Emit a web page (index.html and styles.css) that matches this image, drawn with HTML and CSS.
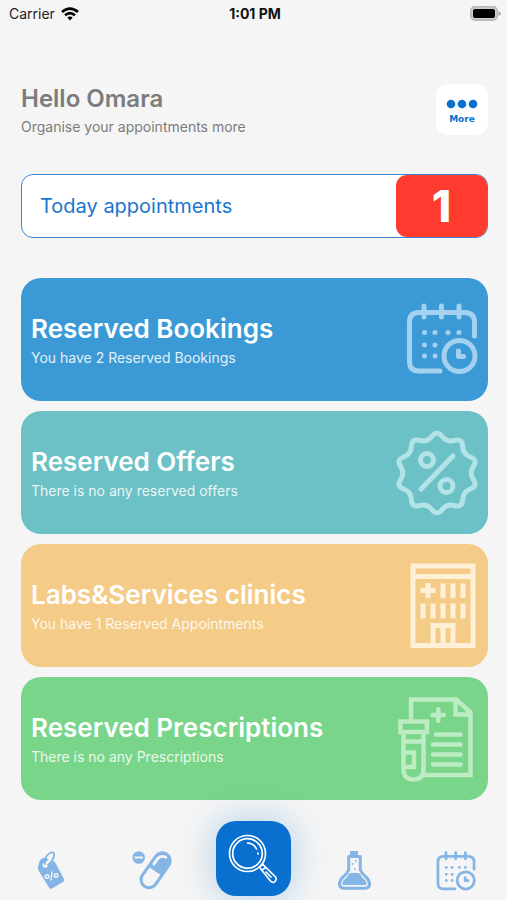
FILE: index.html
```html
<!DOCTYPE html>
<html lang="en">
<head>
<meta charset="utf-8">
<meta name="viewport" content="width=device-width, initial-scale=1">
<title>Appointments</title>
<link rel="stylesheet" href="styles.css">
</head>
<body>
<svg class="defs" aria-hidden="true">
  <symbol id="calendar" viewBox="0 0 72 72">
    <g fill="none" stroke="currentColor" stroke-width="5" stroke-linecap="round" stroke-linejoin="round">
      <path d="M34 68H13Q3.500 68 3.500 58.500V19Q3.500 9.500 13 9.500H58Q68.500 9.500 68.500 19V33"/>
      <path d="M18 3V14M35.500 3V14M53 3V14"/>
      <circle cx="53.500" cy="53" r="15.500"/>
    </g>
    <g fill="currentColor">
      <circle cx="18.500" cy="29.500" r="2.500"/><circle cx="29" cy="29.500" r="2.500"/><circle cx="42" cy="29.500" r="2.500"/><circle cx="53" cy="29.500" r="2.500"/>
      <circle cx="18.500" cy="42" r="2.500"/><circle cx="29" cy="42" r="2.500"/><circle cx="18.500" cy="53" r="2.500"/><circle cx="29" cy="53" r="2.500"/>
      <path d="M50 47.500Q50 45.500 52.500 45.500T55 47.500V51H57.500Q60 51 60 53.500T57.500 56H52.500Q50 56 50 53.500Z"/>
    </g>
  </symbol>
</svg>
<header class="status">
  <span class="carrier">Carrier
    <svg class="wifi" viewBox="0 0 18 14" aria-hidden="true"><g fill="none" stroke="#000" stroke-width="2.600"><path d="M1 5Q9-1.800 17 5"/><path d="M4 8.300Q9 4 14 8.300"/></g><path d="M6.300 10.500Q9 8.500 11.700 10.500L9 13.500Z"/></svg>
  </span>
  <time class="clock">1:01 PM</time>
  <svg class="battery" viewBox="0 0 31 15" aria-hidden="true"><rect x=".8" y=".8" width="26.400" height="13.400" rx="4" fill="#ccc" stroke="#b8b8b8" stroke-width="1.500"/><rect x="3" y="3" width="22" height="9" rx="2"/><path d="M28.500 5Q31 6 31 7.500T28.500 10Z" fill="#aaa"/></svg>
</header>
<main class="content">
  <section class="greeting">
    <div>
      <h1>Hello Omara</h1>
      <p>Organise your appointments more</p>
    </div>
    <button class="more" type="button">
      <svg viewBox="0 0 32 10" aria-hidden="true"><g fill="#0a70cf"><circle cx="5" cy="5" r="4.300"/><circle cx="16" cy="5" r="4.300"/><circle cx="27" cy="5" r="4.300"/></g></svg>
      More
    </button>
  </section>
  <a class="today" href="#today"><span class="label">Today appointments</span><strong class="count">1</strong></a>
  <nav class="cards" aria-label="Reservations">
    <a class="card bookings" href="#bookings">
      <div><h2>Reserved Bookings</h2><p>You have 2 Reserved Bookings</p></div>
      <svg class="art" viewBox="0 0 88 88" aria-hidden="true"><use href="#calendar" x="12" y="7" width="72" height="72"/></svg>
    </a>
    <a class="card offers" href="#offers">
      <div><h2>Reserved Offers</h2><p>There is no any reserved offers</p></div>
      <svg class="art" viewBox="0 0 88 88" aria-hidden="true"><g fill="none" stroke="currentColor" stroke-width="5" stroke-linecap="round" stroke-linejoin="round" transform="translate(43 44)"><path d="M-5-36.700Q0-43 5-36.700Q9.900-30.400 17.600-32.600Q25.300-34.800 25.600-26.800Q25.900-18.800 33.400-16Q40.900-13.300 36.400-6.600Q32 0 36.400 6.600Q40.900 13.300 33.400 16Q25.900 18.800 25.600 26.800Q25.300 34.800 17.600 32.600Q9.900 30.400 5 36.700Q0 43-5 36.700Q-9.900 30.400-17.600 32.600Q-25.300 34.800-25.600 26.800Q-25.900 18.800-33.400 16Q-40.900 13.300-36.400 6.600Q-32 0-36.400-6.600Q-40.900-13.300-33.400-16Q-25.900-18.800-25.600-26.800Q-25.300-34.800-17.600-32.600Q-9.900-30.400-5-36.700Z"/><circle cx="-10" cy="-13" r="6.500"/><circle cx="9.500" cy="13" r="6.500"/><path d="M-16 16L16-17"/></g></svg>
    </a>
    <a class="card labs" href="#labs">
      <div><h2>Labs&amp;Services clinics</h2><p>You have 1 Reserved Appointments</p></div>
      <svg class="art" viewBox="0 0 88 88" aria-hidden="true"><g fill="none" stroke="currentColor" stroke-width="5"><path d="M19 4H79V83.500H19ZM19 14.500H79M39 83V63.500H59V83M49 63V83"/><path d="M26.500 28.500H41.500M34 21V36M49 21.500V36M59 21.500V36M69 21.500V36M29 41.500V56.500M39 41.500V56.500M49 41.500V56.500M59 41.500V56.500M69 41.500V56.500"/></g></svg>
    </a>
    <a class="card prescriptions" href="#prescriptions">
      <div><h2>Reserved Prescriptions</h2><p>There is no any Prescriptions</p></div>
      <svg class="art" viewBox="0 0 88 88" aria-hidden="true"><g fill="none" stroke="currentColor" stroke-width="4.500"><path d="M17 26V4.500H62.500L76.500 17.500V80H29M61.500 5V19.500H76"/><path d="M6.500 26.500H33V37H6.500ZM9.500 37V74Q9.500 84.500 19.500 84.500T29.500 74V37M9.500 46.500H29M11 57.500H20V72H11"/><g stroke-linecap="round"><path d="M38.500 20H50M44.300 14.300V25.700M42 39.500H66.500M39 49.500H66.500M39 59.500H66.500M39 69.500H66.500"/></g></g></svg>
    </a>
  </nav>
</main>
<nav class="tabs" aria-label="Main">
  <a href="#deals" aria-label="Deals"><svg viewBox="0 0 40 40" aria-hidden="true"><path fill="currentColor" d="M12 7Q14 6 17 8L22 9.500Q24 10.500 25 13L33 28Q33.500 30 32 31L21 37.500Q19 38.500 18 36.500L7.500 19.500Q6.500 17.500 7 15.500L9 9Z"/><circle cx="14.300" cy="14" r="2.600" fill="#f5f5f5"/><path fill="none" stroke="#f5f5f5" stroke-width="4" d="M15 13Q20 11 21 6"/><path fill="none" stroke="currentColor" stroke-width="1.800" stroke-linecap="round" d="M14 13Q13 5 20 1.500Q24 .5 23 5Q22 10 17 14"/><g fill="none" stroke="#f5f5f5" stroke-width="1.400" stroke-linecap="round"><circle cx="16" cy="25.500" r="1.800"/><circle cx="25" cy="24.500" r="1.800"/><path d="M20 29L21 21"/></g></svg></a>
  <a href="#medicine" aria-label="Medicine"><svg viewBox="0 0 40 40" aria-hidden="true"><circle cx="6.700" cy="6.500" r="6.300" fill="currentColor"/><path stroke="#f5f5f5" stroke-width="2" d="M2.500 6.500H11"/><g transform="translate(23.600 19.300) rotate(35)"><rect x="-9.500" y="-21" width="19" height="42" rx="9.500" fill="currentColor"/><path fill="#f5f5f5" d="M-6.500 1H6.500V11.500A6.500 6.500 0 0 1-6.500 11.500Z"/><path fill="none" stroke="#f5f5f5" stroke-width="2.800" stroke-linecap="round" stroke-linejoin="round" d="M-5-4V-11Q-4-16 1-16.500"/></g></svg></a>
  <a class="search" href="#search" aria-label="Search"><svg viewBox="0 0 50 50" aria-hidden="true"><g fill="none" stroke="#fff" stroke-width="1.700" stroke-linecap="round" stroke-linejoin="round"><circle cx="19.500" cy="19.500" r="18"/><circle cx="19.500" cy="19.500" r="14.800"/><path d="M19.500 9A10.500 10.500 0 0 1 28.500 15M30 19V20M31.500 33L34.500 30L37.500 33M31.500 33L34 36.500M34 36.500L37.500 33L47.500 43Q49 45.500 47 47.500T42.500 47ZM34 36.500L42.500 47M38 38L43 43"/></g></svg></a>
  <a href="#labs-tests" aria-label="Labs"><svg viewBox="0 0 40 40" aria-hidden="true"><path fill="currentColor" d="M15 0H23V7H15Z"/><path fill="none" stroke="currentColor" stroke-width="3" stroke-linejoin="round" d="M15 5.500H13.700V19Q12 23 7 27Q4 31 4.500 34Q5.500 37.300 9 37.300H30Q33.500 37.300 34.500 34Q35 31 32 27Q27 23 25.300 19V5.500H23"/><path fill="currentColor" d="M14 22.500Q19.500 21 25 22.500Q26 26 30 29Q32 31 31.500 34H7.500Q7 31 9 29Q13 26 14 22.500Z"/><path stroke="currentColor" stroke-width="1.300" d="M17.500 12V14M21 9V11M20 17V19"/></svg></a>
  <a href="#calendar-view" aria-label="Calendar"><svg viewBox="0 0 40 40" aria-hidden="true"><use href="#calendar" x="0" y="0" width="40" height="40"/></svg></a>
</nav>
</body>
</html>
```
FILE: styles.css
```css
* { box-sizing: border-box; }
body {
  margin: 0;
  min-height: 100vh;
  display: flex;
  flex-direction: column;
  background: #f5f5f5;
  font-family: Inter, "Liberation Sans", sans-serif;
  overflow-x: hidden;
}
h1, h2, p { margin: 0; }
a { color: inherit; text-decoration: none; }
svg { display: block; flex: none; }
.defs { position: absolute; width: 0; height: 0; }
.status {
  display: grid;
  grid-template-columns: 1fr auto 1fr;
  align-items: center;
  height: 27px;
  padding: 0 6px 0 9px;
  font-size: 14px;
  color: #222;
}
.carrier { display: flex; align-items: center; gap: 6px; }
.wifi { width: 18px; height: 14px; }
.clock { font-weight: 700; color: #111; }
.battery { width: 31px; height: 15px; justify-self: end; }
.content { padding: 57px 19px 0 21px; }
.greeting {
  display: flex;
  justify-content: space-between;
  align-items: flex-start;
  color: #7c7c7c;
}
.greeting h1 { font-size: 24px; line-height: 30px; font-weight: 600; }
.greeting p { font-size: 14px; line-height: 26px; }
.more {
  display: flex;
  flex-direction: column;
  align-items: center;
  justify-content: center;
  gap: 4px;
  width: 52px;
  height: 51px;
  padding: 4px 0 0;
  border: 0;
  border-radius: 12px;
  background: #fff;
  color: #0a70cf;
  font: 700 9px/12px "DejaVu Sans", sans-serif;
}
.more svg { width: 32px; height: 10px; }
.today {
  display: flex;
  justify-content: space-between;
  align-items: stretch;
  height: 64px;
  margin-top: 34px;
  border: 1px solid #3a88d3;
  border-radius: 12px;
  background: #fff;
  color: #1a76ce;
  font-size: 20px;
}
.label { padding-left: 18px; align-self: center; }
.count {
  display: grid;
  place-items: center;
  width: 91px;
  border-radius: 11px;
  background: #ff3b30;
  color: #fff;
  font-size: 44px;
  font-weight: 800;
}
.cards { display: grid; gap: 10px; margin-top: 40px; }
.card {
  display: flex;
  justify-content: space-between;
  align-items: center;
  height: 123px;
  padding: 0 6px 0 10px;
  border-radius: 20px;
  color: #fff;
}
.card > div { padding-top: 4px; }
.card h2 { font-size: 26px; line-height: 32px; font-weight: 600; }
.card p { font-size: 14px; line-height: 26px; opacity: .85; }
.art { width: 88px; height: 88px; }
.bookings { background: #3b9ad6; }
.bookings .art { color: #a3d1ef; }
.offers { background: #6bc1c5; }
.offers .art { color: #b3e3e7; }
.labs { background: #f4cc87; }
.labs .art { color: #feefd7; }
.prescriptions { background: #78d589; }
.prescriptions .art { color: #bdecc4; }
.tabs {
  display: grid;
  grid-template-columns: repeat(5, 1fr);
  justify-items: center;
  align-items: end;
  padding: 21px 0 4px;
  color: #84b5e4;
}
.tabs a { margin-bottom: 5px; }
.tabs svg { width: 40px; height: 40px; }
.tabs .search {
  display: grid;
  place-items: center;
  width: 75px;
  height: 75px;
  margin-bottom: 0;
  border-radius: 20px;
  background: #0a70cf;
  box-shadow: 0 0 36px rgba(10, 112, 207, .3);
}
.tabs .search svg { width: 50px; height: 50px; }
```
